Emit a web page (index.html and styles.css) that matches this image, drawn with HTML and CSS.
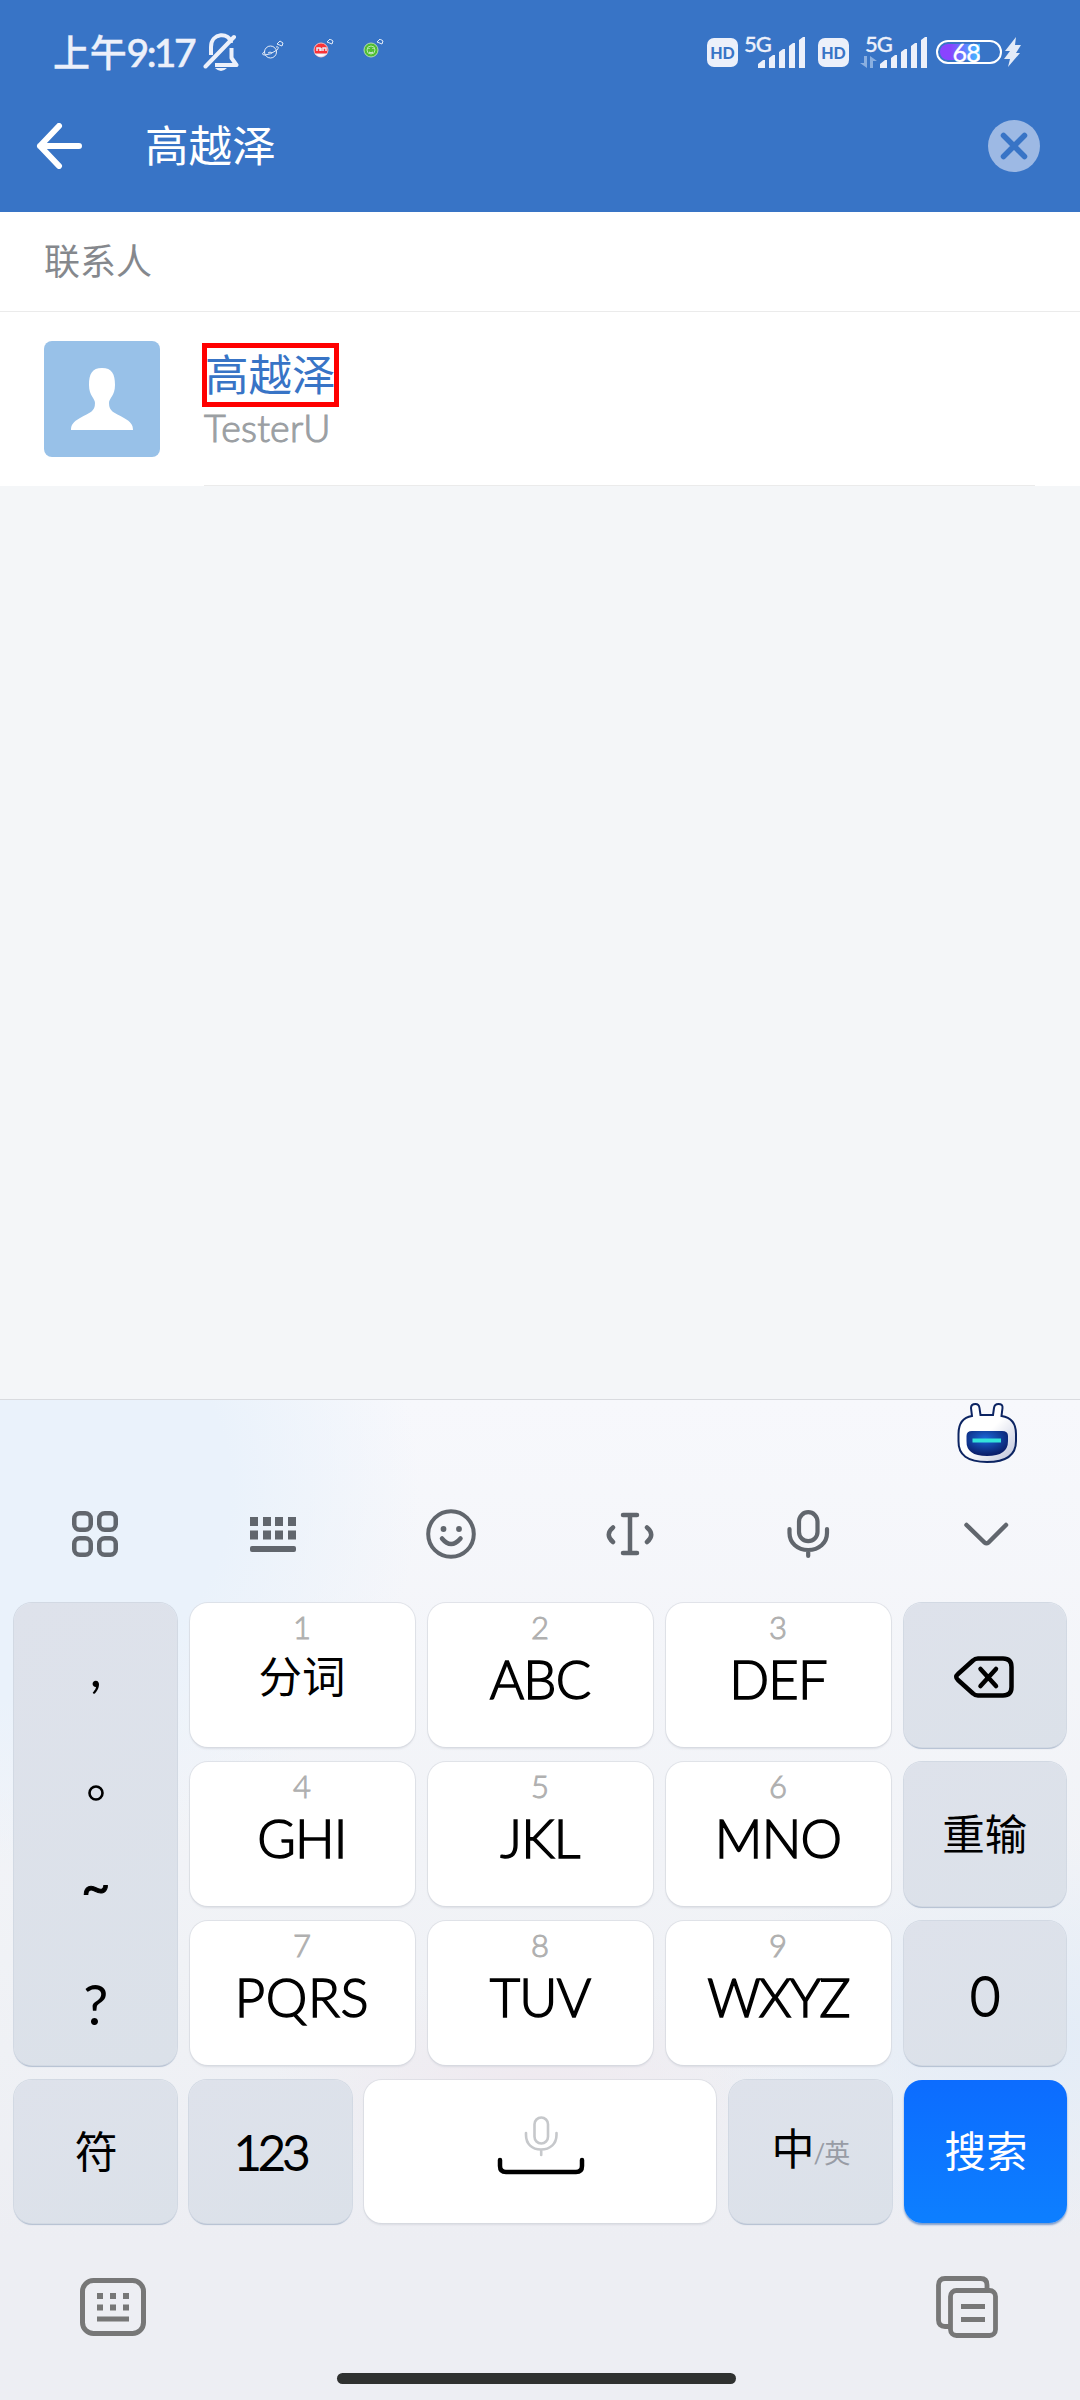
FILE: index.html
```html
<!DOCTYPE html>
<html lang="zh-CN">
<head>
<meta charset="utf-8">
<title>搜索联系人</title>
<link rel="stylesheet" href="styles.css">
</head>
<body>
<header class="header">
  <div class="status">
    <span class="time"><span class="ampm">上午</span>9:17</span>
    <svg class="bell" width="36" height="40" viewBox="0 0 36 40" fill="none" stroke="#ecf0fa" stroke-width="4">
      <path d="M8 22V14C8 -1 27-1 28 10"/><path d="M2.500 33.500L31 4" stroke-linecap="round"/>
      <path d="M28.500 15v10l5 7H12" stroke-linejoin="round"/><path d="M12 35h12q-6 6-12 0z" fill="#ecf0fa" stroke="none"/>
    </svg>
    <svg class="notice planet" width="22" height="20" viewBox="0 0 22 20" fill="none" stroke="#e6edf8" stroke-width="1">
      <circle cx="8.500" cy="12" r="6"/><path d="M3 11q-5 4 0 4t12-5q3-4-1-3M6 13l2-1 2 1"/><path d="M15 4l3-3 3 2-1 3z"/>
    </svg>
    <svg class="notice" width="22" height="20" viewBox="0 0 22 20" fill="none" stroke="#e6edf8" stroke-width="1">
      <circle cx="8" cy="11" r="7" fill="#fa3337" stroke="#f3b9c0"/><path d="M2.500 15q5 5 11 0z" fill="#fff"/><path d="M4 12V9h3v3m1 0V9m2 3V9h3v3" stroke-width="1.500"/><path d="M14 3l3-3 3 2-1 3z"/>
    </svg>
    <svg class="notice" width="22" height="20" viewBox="0 0 22 20" fill="none" stroke="#e6edf8" stroke-width="1">
      <circle cx="8" cy="11" r="7" fill="#50be32" stroke="#b4dbb0"/><circle cx="8" cy="11" r="4" stroke="#b9e8ad"/><path d="M6 9v1m4-1v1m-4 3q2 2 4 0M14 3l3-3 3 2-1 3z"/>
    </svg>
    <span class="spacer"></span>
    <span class="hd">HD</span>
    <span class="signal first"><span class="net">5G</span>
      <svg width="48" height="31" viewBox="0 0 48 31" fill="#ecf0fa"><path d="M0 31v-4l5-4h2v8zM11 31V21l4-3h2v13zM21 31V15l4-3h2v19zM31 31V9l4-3h2v25zM41 31V3l4-3h2v31z"/></svg>
    </span>
    <span class="hd">HD</span>
    <span class="signal second"><span class="net">5G</span>
      <svg class="arrows" width="17" height="12" viewBox="0 0 17 12" fill="#8aafe0"><path d="M4 0h3v12L0 7h4zM10 12h3V5h4L10 0z"/></svg>
      <svg width="48" height="31" viewBox="0 0 48 31" fill="#ecf0fa"><path d="M0 31v-4l5-4h2v8zM11 31V21l4-3h2v13zM21 31V15l4-3h2v19zM31 31V9l4-3h2v25zM41 31V3l4-3h2v31z"/></svg>
    </span>
    <span class="battery"><span class="level">68</span></span>
    <svg class="bolt" width="18" height="30" viewBox="0 0 18 30" fill="#e3ebf8"><path d="M12 0L1 14h5L0 22h6L4 30 16 16h-4l5-8h-6z"/></svg>
  </div>
  <div class="search">
    <svg width="46" height="46" viewBox="0 0 46 46" fill="none" stroke="#fff" stroke-width="6" stroke-linecap="round" stroke-linejoin="round"><path d="M23 3L4 23l19 20M4 23h39"/></svg>
    <span class="query">高越泽</span>
    <svg width="52" height="52" viewBox="0 0 52 52"><circle cx="26" cy="26" r="26" fill="#9db9e4"/><path d="M15.500 15.500l21 21m0-21l-21 21" stroke="#3874c6" stroke-width="5.500" stroke-linecap="round"/></svg>
  </div>
</header>
<main class="results">
  <h2 class="section">联系人</h2>
  <div class="contact">
    <svg class="avatar" width="116" height="116" viewBox="0 0 116 116"><rect width="116" height="116" rx="8" fill="#98c1e8"/><path d="M58 27C48 27 45 33 45 44C45 55 51 57 51 62C51 71 46 71 36 77C29 81 27 84 27 89H89C89 84 87 81 80 77C70 71 65 71 65 62C65 57 71 55 71 44C71 33 68 27 58 27Z" fill="#fff"/></svg>
    <div class="info"><div class="name">高越泽</div><div class="alias">TesterU</div></div>
  </div>
</main>
<section class="keyboard">
  <div class="assistant">
    <svg width="60" height="62" viewBox="0 0 60 62">
      <defs>
        <linearGradient id="shell" x1="0" y1="0" x2="1" y2="1"><stop offset=".5" stop-color="#fff"/><stop offset="1" stop-color="#b9bfd8"/></linearGradient>
        <radialGradient id="visor" cx=".45" cy=".3" r=".65"><stop offset="0" stop-color="#1c67d8"/><stop offset="1" stop-color="#0a1f6c"/></radialGradient>
      </defs>
      <path d="M15 14L14 6Q14 2 18.500 2Q22 2 22.500 6L23.500 13H36L37 6Q37.500 2 41.500 2Q46 2 45.500 6L44.500 14Q59 16 59 32V39Q59 60 30 60T1.500 39V32Q1.500 16 15 14Z" fill="url(#shell)" stroke="#0c2462" stroke-width="2"/>
      <path d="M15 29H45Q51 29 51 34V39Q51 54 30 54T9.500 39V34Q9.500 29 15 29Z" fill="url(#visor)"/><path d="M15.500 38.500h28.500" stroke="#34e4da" stroke-width="4"/>
    </svg>
  </div>
  <div class="tools">
    <svg width="50" height="50" viewBox="0 0 50 50" fill="none" stroke="#61666d" stroke-width="4.500"><rect x="4.250" y="4.250" width="16.500" height="16.500" rx="5.500"/><rect x="29.250" y="4.250" width="16.500" height="16.500" rx="5.500"/><rect x="4.250" y="29.250" width="16.500" height="16.500" rx="5.500"/><rect x="29.250" y="29.250" width="16.500" height="16.500" rx="5.500"/></svg>
    <svg width="50" height="50" viewBox="0 0 50 50" fill="#61666d"><path d="M2 8h8v9H2zM15 8h8v9h-8zM27 8h8v9h-8zM40 8h8v9h-8zM2 21.500h8v9H2zM15 21.500h8v9h-8zM27 21.500h8v9h-8zM40 21.500h8v9h-8z"/><rect x="2" y="37" width="46" height="6" rx="2"/></svg>
    <svg width="50" height="50" viewBox="0 0 50 50" fill="none" stroke="#61666d" stroke-width="4" stroke-linecap="round"><circle cx="25" cy="25" r="22.800"/><path d="M16 29.500q9 11 18.500 0" stroke-width="4.500"/><g fill="#61666d" stroke="none"><circle cx="17.500" cy="20" r="2.900"/><circle cx="33" cy="20" r="2.900"/></g></svg>
    <svg width="50" height="50" viewBox="0 0 50 50" fill="none" stroke="#61666d" stroke-width="4.500" stroke-linecap="round" stroke-linejoin="round"><path d="M18 6h14M18 44h14M25 6v38M8 18.500Q-.500 25.500 8 33M42 18.500q8.500 7 0 14.500"/></svg>
    <svg width="50" height="50" viewBox="0 0 50 50" fill="none" stroke="#61666d" stroke-width="4.200" stroke-linecap="round"><rect x="16" y="3.200" width="18.500" height="29" rx="9.250"/><path d="M6.500 20v4c0 10 8 17 18.700 17S44 34 44 24v-4M25.200 41v6"/></svg>
    <svg width="50" height="50" viewBox="0 0 50 50" fill="none" stroke="#61666d" stroke-width="4.500" stroke-linecap="round" stroke-linejoin="round"><path d="M5.500 16l18 17.500q2 1.500 4 0L45 16"/></svg>
  </div>
  <div class="keys">
    <div class="key fn marks"><span class="comma">,</span><svg width="18" height="18" viewBox="0 0 18 18"><circle cx="9" cy="9" r="6.500" fill="none" stroke="#000" stroke-width="2.600"/></svg><span class="tilde">~</span><span class="question">?</span></div>
    <div class="key"><span class="hint">1</span><span class="label han">分词</span></div>
    <div class="key"><span class="hint">2</span><span class="label">ABC</span></div>
    <div class="key"><span class="hint">3</span><span class="label">DEF</span></div>
    <div class="key fn"><svg class="erase" width="62" height="44" viewBox="0 0 62 44" fill="none" stroke="#000" stroke-width="4.500" stroke-linecap="round" stroke-linejoin="round"><path d="M25 3.500H50Q58.500 3.500 58.500 12V32Q58.500 40.500 50 40.500H25Q22 40.500 20 38.500L5 25Q1.500 22 5 19L20 5.500Q22 3.500 25 3.500ZM27.500 14L43 31M43 14L27.500 31"/></svg></div>
    <div class="key"><span class="hint">4</span><span class="label">GHI</span></div>
    <div class="key"><span class="hint">5</span><span class="label">JKL</span></div>
    <div class="key"><span class="hint">6</span><span class="label">MNO</span></div>
    <div class="key fn"><span class="solo han reset">重输</span></div>
    <div class="key"><span class="hint">7</span><span class="label wide">PQRS</span></div>
    <div class="key"><span class="hint">8</span><span class="label">TUV</span></div>
    <div class="key"><span class="hint">9</span><span class="label tight">WXYZ</span></div>
    <div class="key fn"><span class="solo zero">0</span></div>
  </div>
  <div class="keys bottom">
    <div class="key fn"><span class="solo han symbols">符</span></div>
    <div class="key fn"><span class="solo num">123</span></div>
    <div class="key"><svg class="space" width="88" height="62" viewBox="0 0 88 62" fill="none" stroke-linecap="round"><g stroke="#c6c8cb" stroke-width="2.600"><rect x="37.500" y="2.500" width="13.500" height="26" rx="6.750"/><path d="M29 18v2c0 9 6 14.500 15 14.500S59.500 29 59.500 20v-2M44.200 35v5"/></g><path d="M3 45v6q0 6 6 6h70q6 0 6-6v-6" stroke="#000" stroke-width="4.500"/></svg></div>
    <div class="key fn"><span class="solo lang">中<small>/英</small></span></div>
    <div class="key go"><span class="solo submit">搜索</span></div>
  </div>
  <div class="dock">
    <svg width="66" height="58" viewBox="0 0 66 58"><rect x="2.500" y="2.500" width="61" height="53" rx="11" fill="none" stroke="#777" stroke-width="5"/><path d="M17 15h6v6h-6zM30 15h6v6h-6zM43 15h6v6h-6zM17 26.500h6v6h-6zM30 26.500h6v6h-6zM43 26.500h6v6h-6zM17 38.500h32v5H17z" fill="#777"/></svg>
    <svg width="62" height="62" viewBox="0 0 62 62" fill="none" stroke="#777" stroke-width="4.800"><rect x="14.500" y="14.500" width="45" height="45" rx="6"/><path d="M14.500 50.500H9q-6.500 0-6.500-6.500V9Q2.500 2.500 9 2.500h35.500q6.500 0 6.500 6.500v5.500M25 30.500h24M25 43.500h24"/></svg>
  </div>
  <div class="home"></div>
</section>
</body>
</html>
```
FILE: styles.css
```css
* { box-sizing: border-box; }
body {
  margin: 0;
  width: 1080px;
  height: 2400px;
  display: flex;
  flex-direction: column;
  overflow: hidden;
  background: #f4f6f8;
  font-family: Lato, "Noto Sans CJK SC", sans-serif;
}
svg { display: block; flex: none; }

.header { height: 212px; background: #3874c6; color: #fff; }
.status { height: 80px; padding: 24px 58px 0 53px; display: flex; align-items: center; color: #ecf0fa; }
.time { font-size: 39px; font-weight: 500; line-height: 55px; width: 143px; letter-spacing: -2.600px; white-space: nowrap; -webkit-text-stroke: .5px #ecf0fa; }
.ampm { font-size: 37px; letter-spacing: -.2px; -webkit-text-stroke: .3px #ecf0fa; }
.bell { margin: 1px 23px 0 7px; }
.notice { margin: -6px 28px 0 0; }
.planet { margin-right: 29px; margin-top: -4px; }
.spacer { flex: 1; }
.hd { width: 31px; height: 29px; border-radius: 7px; background: #ecf0fa; color: #3874c6; font: 900 16px/29px Lato, sans-serif; text-align: center; }
.signal { position: relative; display: flex; justify-content: flex-end; margin-right: 12px; }
.signal.first { width: 68px; }
.signal.second { width: 79px; margin-right: 8px; }
.net { position: absolute; top: -6px; left: 6px; font-size: 22px; font-weight: 500; line-height: 26px; letter-spacing: -1px; -webkit-text-stroke: .3px #ecf0fa; }
.second .net { left: 16px; }
.arrows { margin: 19px 3px 0 0; }
.battery { width: 66px; height: 24px; border: 2px solid #fff; border-radius: 12px; padding: 2px; }
.level { display: block; width: 40px; height: 16px; border-radius: 8px 0 0 8px; background: linear-gradient(90deg, #8a43ff 25%, #3bc0ff); color: #fff; font-size: 25px; line-height: 16px; text-align: right; letter-spacing: -.8px; -webkit-text-stroke: .3px #fff; }
.bolt { margin-left: 2px; }
.search { height: 132px; padding: 0 40px 0 36px; display: flex; align-items: center; }
.query { flex: 1; margin-left: 63px; font-size: 43.600px; line-height: 60px; margin-top: -3px; }

.results { background: #fff; height: 274px; }
.section { margin: 0; height: 100px; padding-left: 44px; border-bottom: 1px solid #ebebeb; font-size: 36px; font-weight: 400; line-height: 98px; color: #85888d; }
.contact { height: 174px; padding: 29px 44px; display: flex; gap: 42px; position: relative; }
.contact::after { content: ""; position: absolute; left: 204px; right: 45px; bottom: 0; height: 1px; background: #ebebeb; }
.info { padding-top: 2px; }
.name { width: 137px; height: 64px; border: 5px solid #f00; font-size: 43.500px; line-height: 52px; color: #3874c6; white-space: nowrap; text-indent: -2px; }
.alias { margin-left: 2px; font-size: 37.500px; font-weight: 300; line-height: 42px; color: #9b9fa3; letter-spacing: .2px; -webkit-text-stroke: 1.100px #9b9fa3; }

.keyboard {
  margin-top: auto;
  height: 1001px;
  border-top: 1px solid #d9dbdf;
  display: flex;
  flex-direction: column;
  background:
    radial-gradient(ellipse 420px 380px at 0 90px, #eaf2fb 55%, #eaf2fb00),
    radial-gradient(ellipse 340px 200px at 1040px 640px, #e3ecf7, #e3ecf700),
    radial-gradient(ellipse 260px 110px at 530px 690px, #efe9ef, #efe9ef00),
    linear-gradient(#f7f8fc, #eff1f5 65%, #edeef3 84%);
}
.assistant { height: 71px; display: flex; justify-content: flex-end; padding: 2px 63px 0 0; }
.tools { height: 131px; padding: 0 5px 6px 6px; display: grid; grid-template-columns: repeat(6, 1fr); align-items: center; justify-items: center; }
.keys { display: grid; grid-template-columns: 162.500px 225px 225px 225px 162.500px; grid-auto-rows: 143.500px; gap: 15.500px 13px; margin: 1px 14px 15px 14px; }
.bottom { grid-template-columns: 162.500px 162.500px 352px 163px 163px; column-gap: 12.500px; margin-top: 0; margin-bottom: 0; }
.key { border-radius: 18px; background: #fff; box-shadow: 0 0 0 1px #d3d7de99, 0 2px 2px #bfc4ce66; display: flex; flex-direction: column; align-items: center; padding-top: 2px; color: #000; }
.fn { background: linear-gradient(150deg, #dee2eb, #dbe1e9); box-shadow: 0 0 0 1px #d2d9e3, 0 2px 1px #b3bfd1; }
.hint { font-size: 31px; font-weight: 300; line-height: 44px; color: #b0b0b0; -webkit-text-stroke: 1px #b0b0b0; }
.label { font-size: 52.500px; font-weight: 300; line-height: 60px; letter-spacing: -.8px; -webkit-text-stroke: 1.500px #000; }
.label.wide { letter-spacing: .6px; }
.label.tight { letter-spacing: -1.800px; }
.label.han { font-size: 43.500px; font-weight: 400; line-height: 54px; letter-spacing: 0; -webkit-text-stroke: 0; }
.solo { font-size: 43px; line-height: 136px; }
.reset { line-height: 139px; font-size: 42.500px; }
.symbols { line-height: 139px; padding-left: 2px; }
.submit { line-height: 138px; font-size: 41.500px; padding-left: 1px; }
.zero { font-size: 56px; font-weight: 300; line-height: 143px; -webkit-text-stroke: 2px #000; transform: scaleX(.92); }
.num { font-size: 48px; font-weight: 300; letter-spacing: -3.500px; line-height: 140px; -webkit-text-stroke: 1.800px #000; }
.lang { font-size: 43px; line-height: 134px; letter-spacing: -1px; padding-left: 1px; }
.lang small { font-size: 26px; color: #989ca5; vertical-align: 2px; line-height: 1; }
.marks { grid-row: span 3; font-size: 53px; padding: 34px 0 0 1px; }
.marks span { line-height: 60px; height: 60px; }
.comma { margin-bottom: 87px; }
.tilde { margin-top: 54px; font-size: 50px; font-weight: 400; -webkit-text-stroke: 1px #000; }
.question { margin-top: 58px; font-size: 56px; }
.erase { margin: 50px 2px 0 0; }
.space { margin-top: 33px; margin-left: 1px; }
.go { background: linear-gradient(#0c6cff, #0d7fff); color: #fff; box-shadow: 0 2px 2px #7d9ccc; }
.dock { height: 150px; padding: 53px 82px 0 80px; display: flex; justify-content: space-between; align-items: flex-start; }
.dock svg:first-child { margin-top: 2px; }
.home { width: 399px; height: 11px; border-radius: 6px; background: #2f3130; margin-left: 337px; }
```
